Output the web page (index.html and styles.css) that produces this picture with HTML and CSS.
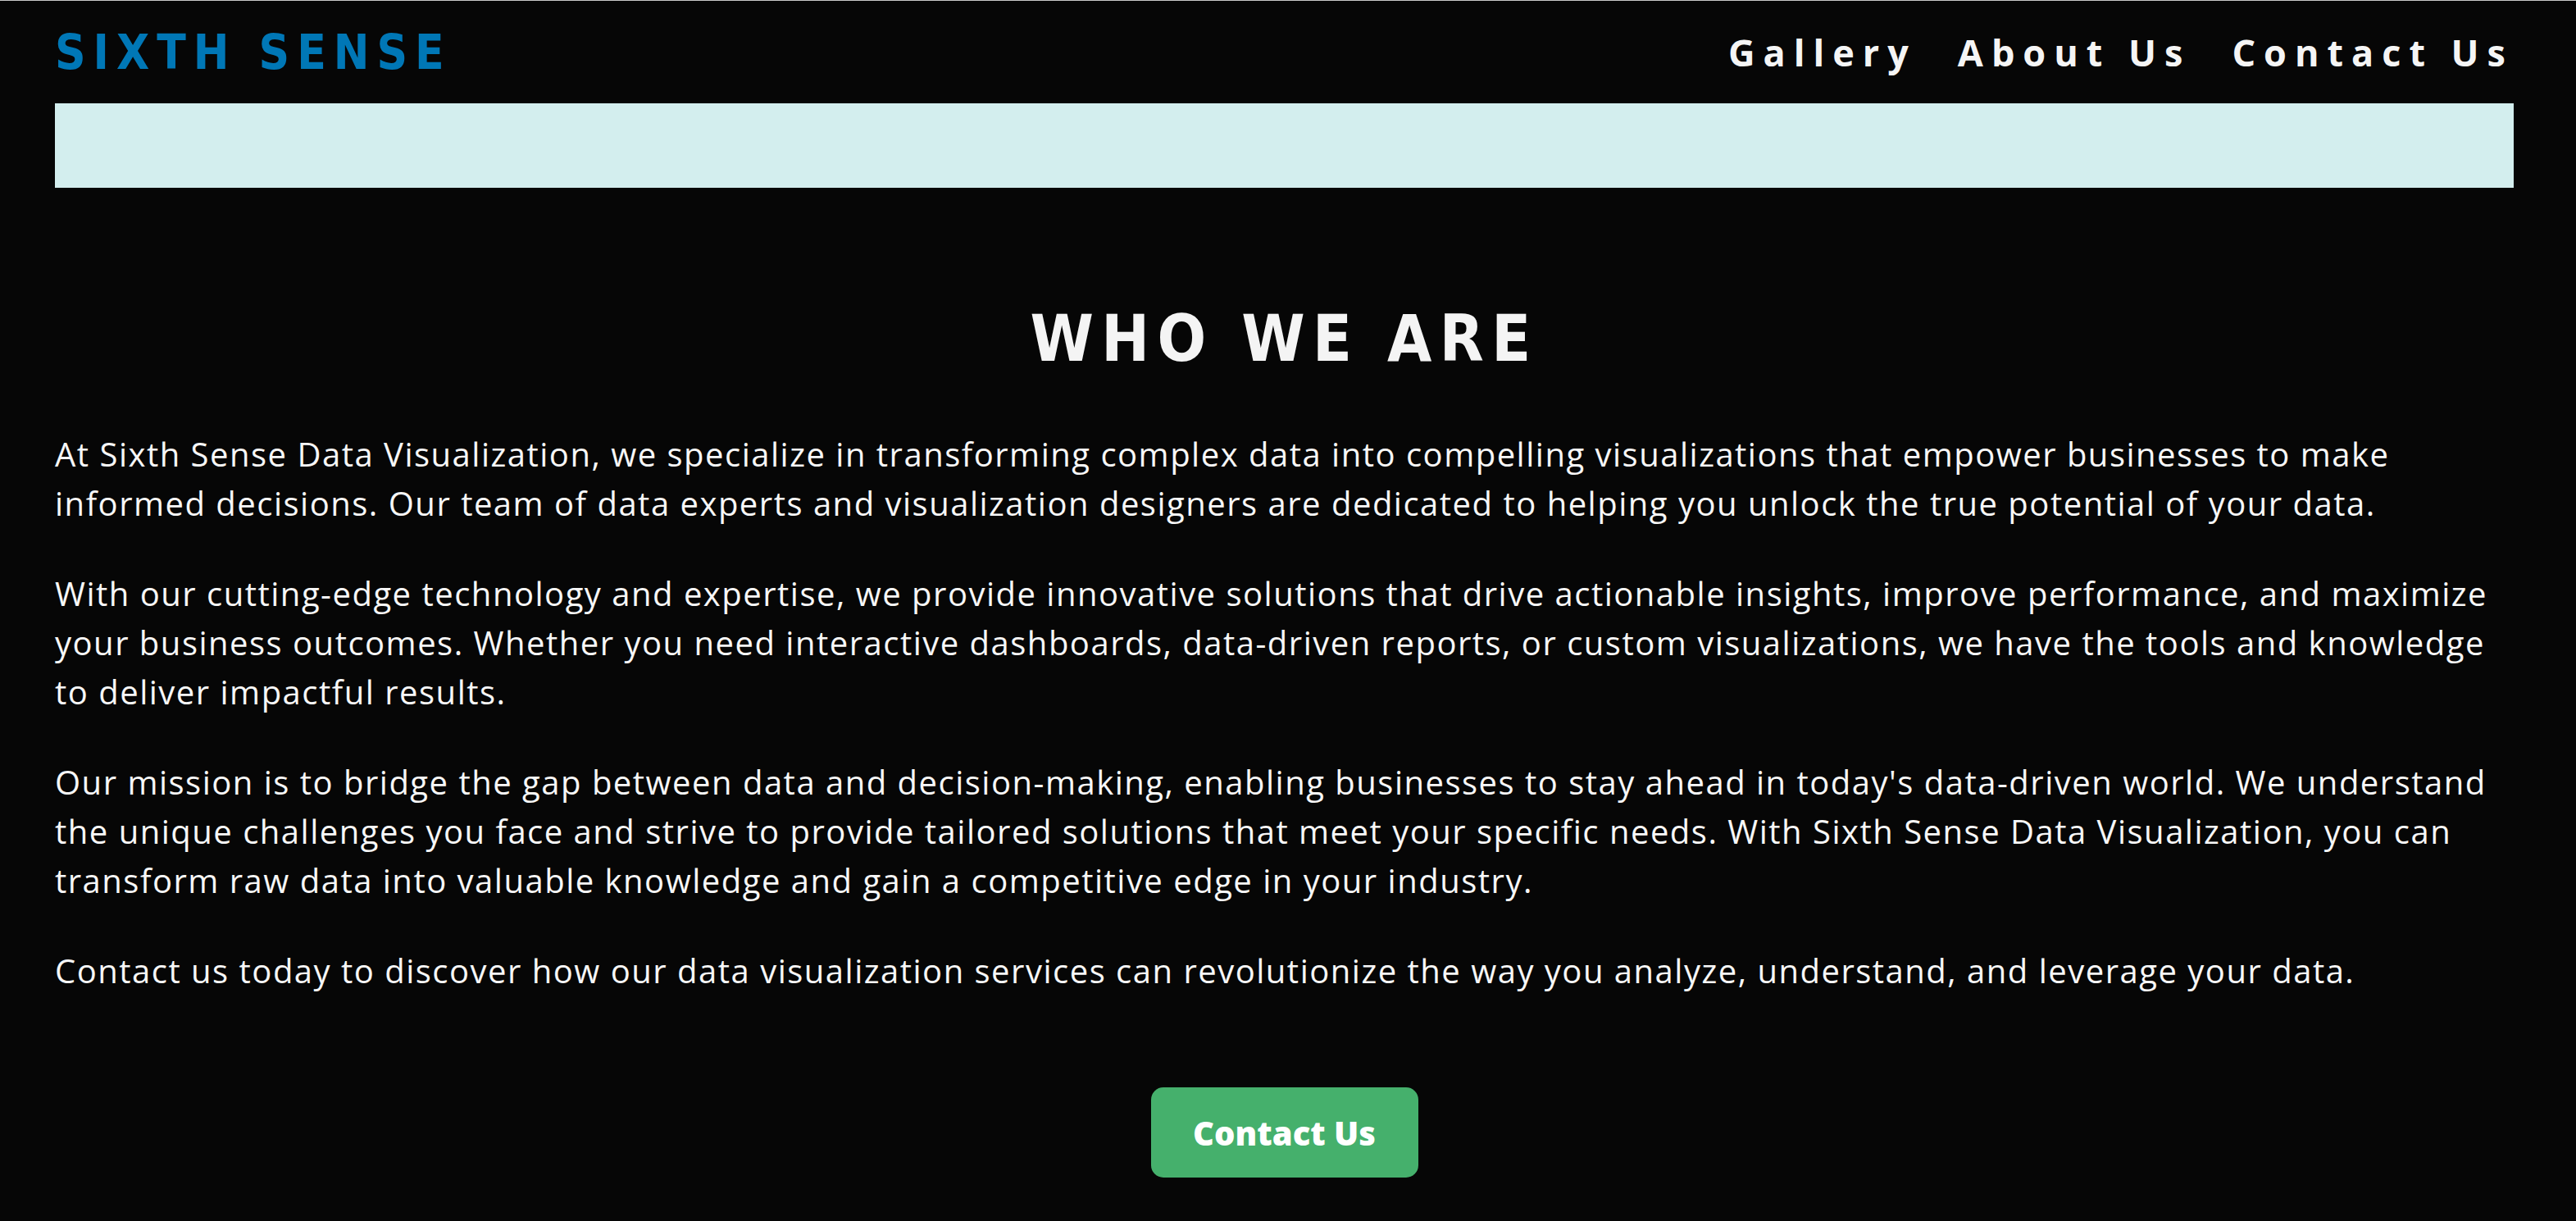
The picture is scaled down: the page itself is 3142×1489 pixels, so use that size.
FILE: index.html
```html
<!DOCTYPE html>
<html lang="en">
<head>
<meta charset="utf-8">
<title>Sixth Sense</title>
<link rel="stylesheet" href="styles.css">
</head>
<body>
<div class="page">
  <header class="header">
    <div class="logo">SIXTH SENSE</div>
    <nav class="nav">
      <a href="#">Gallery</a>
      <a href="#">About Us</a>
      <a href="#">Contact Us</a>
    </nav>
  </header>
  <div class="band"></div>
  <section class="about">
    <h2 class="title">WHO WE ARE</h2>
    <p>At Sixth Sense Data Visualization, we specialize in transforming complex data into compelling visualizations that empower businesses to make informed decisions. Our team of data experts and visualization designers are dedicated to helping you unlock the true potential of your data.</p>
    <p>With our cutting-edge technology and expertise, we provide innovative solutions that drive actionable insights, improve performance, and maximize your business outcomes. Whether you need interactive dashboards, data-driven reports, or custom visualizations, we have the tools and knowledge to deliver impactful results.</p>
    <p>Our mission is to bridge the gap between data and decision-making, enabling businesses to stay ahead in today's data-driven world. We understand the unique challenges you face and strive to provide tailored solutions that meet your specific needs. With Sixth Sense Data Visualization, you can transform raw data into valuable knowledge and gain a competitive edge in your industry.</p>
    <p>Contact us today to discover how our data visualization services can revolutionize the way you analyze, understand, and leverage your data.</p>
    <div class="cta-wrap"><a class="cta" href="#">Contact Us</a></div>
  </section>
</div>
</body>
</html>
```
FILE: styles.css
```css
html, body {
  margin: 0;
  padding: 0;
  background: #060606;
}
body {
  border-top: 1px solid #c8c8c8;
  font-family: "Open Sans", "DejaVu Sans", sans-serif;
  color: #f5f5f5;
}
.page {
  padding: 0 76px 0 67px;
}
.header {
  height: 125px;
  display: flex;
  align-items: center;
  justify-content: space-between;
}
.logo {
  font-family: "DejaVu Sans Condensed", "DejaVu Sans", sans-serif;
  font-stretch: condensed;
  font-weight: bold;
  font-size: 58px;
  letter-spacing: 0.155em;
  color: #0077b6;
  line-height: 1;
}
.nav {
  display: flex;
  gap: 50px;
}
.nav a {
  font-family: "Open Sans", sans-serif;
  font-weight: 700;
  font-size: 45px;
  letter-spacing: 10px;
  color: #f5f5f5;
  text-decoration: none;
  line-height: 1;
}
.band {
  height: 103px;
  background: #d3eeee;
}
.about {
  padding-top: 145px;
}
.title {
  margin: 0;
  text-align: center;
  font-family: "DejaVu Sans Condensed", "DejaVu Sans", sans-serif;
  font-stretch: condensed;
  font-weight: bold;
  font-size: 78px;
  line-height: 1;
  letter-spacing: 0.12em;
  color: #f4f4f4;
}
.about p {
  margin: 0;
  font-size: 40px;
  line-height: 60px;
  letter-spacing: 1.5px;
  color: #f7f7f7;
}
.title + p {
  margin-top: 72px;
}
.about p + p {
  margin-top: 50px;
}
.cta-wrap {
  display: flex;
  justify-content: center;
  padding-top: 112px;
  padding-bottom: 60px;
}
.cta {
  display: flex;
  align-items: center;
  justify-content: center;
  width: 326px;
  height: 110px;
  border-radius: 15px;
  background: #45b06c;
  color: #ffffff;
  font-family: "Open Sans", sans-serif;
  font-weight: 800;
  font-size: 40px;
  text-decoration: none;
}
```
